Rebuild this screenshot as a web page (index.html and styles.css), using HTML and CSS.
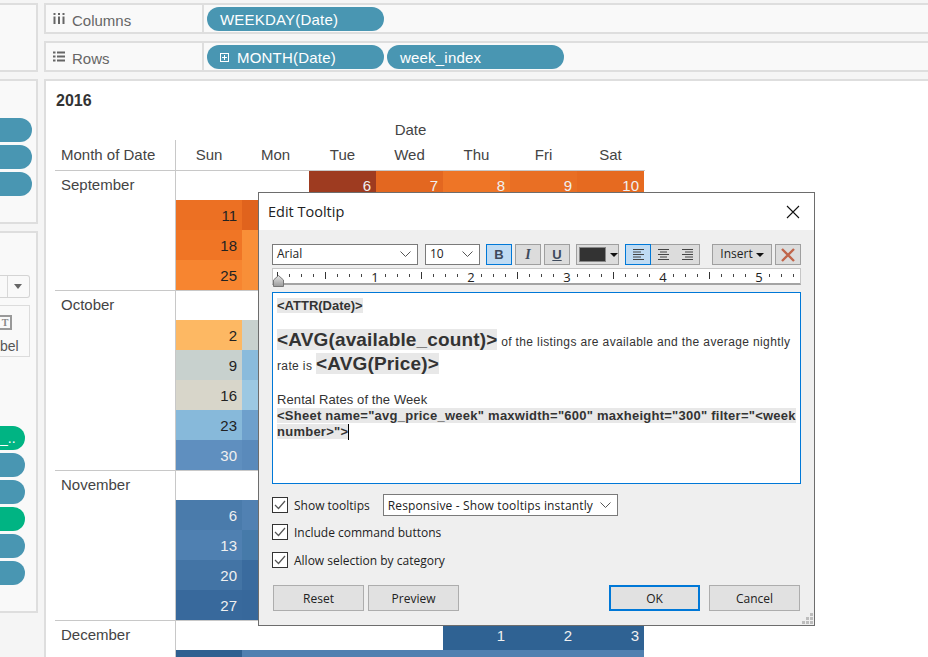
FILE: index.html
```html
<!DOCTYPE html>
<html lang="en">
<head>
  <meta charset="UTF-8" />
  <title>Edit Tooltip</title>
  <link rel="stylesheet" href="styles.css">
</head>
<body>
  <div class="workspace">
    <aside class="side">
      <div class="side-box box-top"></div>
      <div class="side-box box-fields">
        <div class="pill pill-wide"></div>
        <div class="pill pill-wide"></div>
        <div class="pill pill-wide"></div>
      </div>
      <div class="side-box box-marks">
        <div class="mark-select"><span class="mark-arrow"></span></div>
        <div class="mark-card">
          <span class="t-icon">T</span>
          <span class="mark-label">bel</span>
        </div>
        <div class="mark-pills">
          <div class="pill pill-green">_..</div>
          <div class="pill"></div>
          <div class="pill"></div>
          <div class="pill pill-green"></div>
          <div class="pill"></div>
          <div class="pill"></div>
        </div>
      </div>
    </aside>

    <main class="main">
      <div class="shelf">
        <div class="shelf-name">
          <svg class="shelf-icon" width="12" height="11" viewBox="0 0 12 11"><path d="M1.500 0v2M6 0v2M10.500 0v2M1.500 3.500V11M6 3.500V11M10.500 3.500V11" stroke="#666" stroke-width="2"/></svg>
          Columns
        </div>
        <div class="pill shelf-pill">WEEKDAY(Date)</div>
      </div>
      <div class="shelf">
        <div class="shelf-name">
          <svg class="shelf-icon" width="12" height="11" viewBox="0 0 12 11"><path d="M0 1.500h2.500M4 1.500h8M0 5.500h2.500M4 5.500h8M0 9.500h2.500M4 9.500h8" stroke="#666" stroke-width="2"/></svg>
          Rows
        </div>
        <div class="pill shelf-pill"><span class="plus-box"></span>MONTH(Date)</div>
        <div class="pill shelf-pill">week_index</div>
      </div>

      <section class="sheet">
        <h2 class="sheet-title">2016</h2>
        <div class="calendar">
          <div class="date-head">Date</div>
          <div class="head-row">
            <div class="month-name">Month of Date</div>
            <div class="weeks">
              <div>Sun</div><div>Mon</div><div>Tue</div><div>Wed</div><div>Thu</div><div>Fri</div><div>Sat</div>
            </div>
          </div>

          <div class="month">
            <div class="month-name">September</div>
            <div class="weeks">
              <div></div><div></div>
              <div class="day lt" style="background:#9e3b20">6</div>
              <div class="day lt" style="background:#e36720">7</div>
              <div class="day lt" style="background:#ee7526">8</div>
              <div class="day lt" style="background:#e96f24">9</div>
              <div class="day lt" style="background:#e66a20">10</div>
              <div class="day" style="background:#ec7023">11</div>
              <div class="day" style="background:#e0631d">12</div>
              <div class="day" style="background:#ee7526">13</div>
              <div class="day" style="background:#f07a28">14</div>
              <div class="day" style="background:#f07a28">15</div>
              <div class="day" style="background:#ee7526">16</div>
              <div class="day" style="background:#ee7526">17</div>
              <div class="day" style="background:#f07525">18</div>
              <div class="day" style="background:#f98f38">19</div>
              <div class="day" style="background:#f98f38">20</div>
              <div class="day" style="background:#f98f38">21</div>
              <div class="day" style="background:#f98f38">22</div>
              <div class="day" style="background:#f07a28">23</div>
              <div class="day" style="background:#f07a28">24</div>
              <div class="day" style="background:#f78530">25</div>
              <div class="day" style="background:#f88f38">26</div>
              <div class="day" style="background:#f88f38">27</div>
              <div class="day" style="background:#f88f38">28</div>
              <div class="day" style="background:#f88f38">29</div>
              <div class="day" style="background:#f07a28">30</div>
              <div></div>
            </div>
          </div>

          <div class="month">
            <div class="month-name">October</div>
            <div class="weeks">
              <div></div><div></div><div></div><div></div><div></div><div></div><div></div>
              <div class="day" style="background:#fdb863">2</div>
              <div class="day" style="background:#c8d1ce">3</div>
              <div class="day" style="background:#c8d1ce">4</div>
              <div class="day" style="background:#c8d1ce">5</div>
              <div class="day" style="background:#c8d1ce">6</div>
              <div class="day" style="background:#c8d1ce">7</div>
              <div class="day" style="background:#c8d1ce">8</div>
              <div class="day" style="background:#c8d1ce">9</div>
              <div class="day" style="background:#8abbdc">10</div>
              <div class="day" style="background:#8abbdc">11</div>
              <div class="day" style="background:#8abbdc">12</div>
              <div class="day" style="background:#8abbdc">13</div>
              <div class="day" style="background:#8abbdc">14</div>
              <div class="day" style="background:#8abbdc">15</div>
              <div class="day" style="background:#d8d6ca">16</div>
              <div class="day" style="background:#9cc8e2">17</div>
              <div class="day" style="background:#9cc8e2">18</div>
              <div class="day" style="background:#9cc8e2">19</div>
              <div class="day" style="background:#9cc8e2">20</div>
              <div class="day" style="background:#9cc8e2">21</div>
              <div class="day" style="background:#9cc8e2">22</div>
              <div class="day" style="background:#87b9da">23</div>
              <div class="day" style="background:#6ea0cc">24</div>
              <div class="day" style="background:#6ea0cc">25</div>
              <div class="day" style="background:#6ea0cc">26</div>
              <div class="day" style="background:#6ea0cc">27</div>
              <div class="day" style="background:#6ea0cc">28</div>
              <div class="day" style="background:#6ea0cc">29</div>
              <div class="day lt" style="background:#5f8fbf">30</div>
              <div class="day lt" style="background:#5a8abb">31</div>
            </div>
          </div>

          <div class="month">
            <div class="month-name">November</div>
            <div class="weeks">
              <div></div><div></div>
              <div class="day lt" style="background:#5a8abb">1</div>
              <div class="day lt" style="background:#5a8abb">2</div>
              <div class="day lt" style="background:#5a8abb">3</div>
              <div class="day lt" style="background:#5a8abb">4</div>
              <div class="day lt" style="background:#5a8abb">5</div>
              <div class="day lt" style="background:#4a7bab">6</div>
              <div class="day lt" style="background:#5181b2">7</div>
              <div class="day lt" style="background:#5181b2">8</div>
              <div class="day lt" style="background:#5181b2">9</div>
              <div class="day lt" style="background:#5181b2">10</div>
              <div class="day lt" style="background:#5181b2">11</div>
              <div class="day lt" style="background:#5181b2">12</div>
              <div class="day lt" style="background:#4f80b1">13</div>
              <div class="day lt" style="background:#467aa9">14</div>
              <div class="day lt" style="background:#467aa9">15</div>
              <div class="day lt" style="background:#467aa9">16</div>
              <div class="day lt" style="background:#467aa9">17</div>
              <div class="day lt" style="background:#467aa9">18</div>
              <div class="day lt" style="background:#467aa9">19</div>
              <div class="day lt" style="background:#4374a5">20</div>
              <div class="day lt" style="background:#3a6b9e">21</div>
              <div class="day lt" style="background:#3a6b9e">22</div>
              <div class="day lt" style="background:#3a6b9e">23</div>
              <div class="day lt" style="background:#3a6b9e">24</div>
              <div class="day lt" style="background:#3a6b9e">25</div>
              <div class="day lt" style="background:#3a6b9e">26</div>
              <div class="day lt" style="background:#38699c">27</div>
              <div class="day lt" style="background:#37689b">28</div>
              <div class="day lt" style="background:#37689b">29</div>
              <div class="day lt" style="background:#37689b">30</div>
              <div></div><div></div><div></div>
            </div>
          </div>

          <div class="month">
            <div class="month-name">December</div>
            <div class="weeks">
              <div></div><div></div><div></div><div></div>
              <div class="day lt" style="background:#2f6293">1</div>
              <div class="day lt" style="background:#2f6293">2</div>
              <div class="day lt" style="background:#2f6293">3</div>
              <div class="day" style="background:#2f6090"></div>
              <div class="day" style="background:#5080b0"></div>
              <div class="day" style="background:#5080b0"></div>
              <div class="day" style="background:#5080b0"></div>
              <div class="day" style="background:#5080b0"></div>
              <div class="day" style="background:#5080b0"></div>
              <div class="day" style="background:#5080b0"></div>
            </div>
          </div>
        </div>
      </section>
    </main>
  </div>

  <div class="dialog">
    <div class="dialog-title">
      <span>Edit Tooltip</span>
      <svg width="14" height="14" viewBox="0 0 14 14"><path d="M1 1l12 12M13 1L1 13" stroke="#111" stroke-width="1.100"/></svg>
    </div>
    <div class="dialog-body">
      <div class="toolbar">
        <div class="select font-select">Arial<svg class="chev" width="11" height="6" viewBox="0 0 11 6"><path d="M.5.5l5 5 5-5" fill="none" stroke="#555"/></svg></div>
        <div class="select size-select">10<svg class="chev" width="11" height="6" viewBox="0 0 11 6"><path d="M.5.5l5 5 5-5" fill="none" stroke="#555"/></svg></div>
        <div class="tool tool-on fmt bold">B</div>
        <div class="tool fmt italic">I</div>
        <div class="tool fmt under">U</div>
        <div class="tool color-tool"><span class="swatch"></span><span class="caret"></span></div>
        <div class="align-group">
          <div class="tool-on align-btn">
            <svg width="11" height="11" viewBox="0 0 11 11"><path d="M0 .5h11M0 3h8M0 5.500h11M0 8h8M0 10.500h11" stroke="#444"/></svg>
          </div>
          <div class="align-btn">
            <svg width="11" height="11" viewBox="0 0 11 11"><path d="M0 .5h11M2 3h7M0 5.500h11M2 8h7M0 10.500h11" stroke="#444"/></svg>
          </div>
          <div class="align-btn">
            <svg width="11" height="11" viewBox="0 0 11 11"><path d="M0 .5h11M3 3h8M0 5.500h11M3 8h8M0 10.500h11" stroke="#444"/></svg>
          </div>
        </div>
        <div class="tool insert">Insert<span class="caret"></span></div>
        <div class="tool clear">
          <svg width="14" height="14" viewBox="0 0 14 14"><path d="M1 1l12 12M13 1L1 13" stroke="#c0654a" stroke-width="2.400"/></svg>
        </div>
      </div>

      <div class="ruler">
        <span>1</span><span>2</span><span>3</span><span>4</span><span>5</span>
        <svg class="ruler-thumb" width="11" height="12" viewBox="0 0 11 12">
          <defs><linearGradient id="thumbFill" x1="0" y1="0" x2="0" y2="1"><stop offset="0" stop-color="#e4e4e4"/><stop offset="1" stop-color="#9a9a9a"/></linearGradient></defs>
          <path d="M.5 11.500V5L5.500.5l5 4.500v6.500z" fill="url(#thumbFill)" stroke="#777"/>
        </svg>
      </div>

      <div class="editor">
        <p class="ed-line1"><span class="field field-small">&lt;ATTR(Date)&gt;</span></p>
        <p class="ed-para"><span class="field field-big">&lt;AVG(available_count)&gt;</span> of the listings are available and the average nightly rate is <span class="field field-big">&lt;AVG(Price)&gt;</span></p>
        <p class="ed-rental">Rental Rates of the Week</p>
        <p class="ed-sheet"><span class="field field-small">&lt;Sheet name="avg_price_week" maxwidth="600" maxheight="300" filter="&lt;week number&gt;"&gt;</span><span class="cursor"></span></p>
      </div>

      <div class="option option-first">
        <span class="check"><svg width="12" height="10" viewBox="0 0 12 10"><path d="M1 5l3.500 3.500L11 1" fill="none" stroke="#555" stroke-width="1.200"/></svg></span>
        <span class="option-text">Show tooltips</span>
        <div class="select tip-select">Responsive - Show tooltips instantly<svg class="chev" width="11" height="6" viewBox="0 0 11 6"><path d="M.5.5l5 5 5-5" fill="none" stroke="#555"/></svg></div>
      </div>
      <div class="option option-second">
        <span class="check"><svg width="12" height="10" viewBox="0 0 12 10"><path d="M1 5l3.500 3.500L11 1" fill="none" stroke="#555" stroke-width="1.200"/></svg></span>
        <span class="option-text">Include command buttons</span>
      </div>
      <div class="option">
        <span class="check"><svg width="12" height="10" viewBox="0 0 12 10"><path d="M1 5l3.500 3.500L11 1" fill="none" stroke="#555" stroke-width="1.200"/></svg></span>
        <span class="option-text">Allow selection by category</span>
      </div>

      <div class="actions">
        <button class="btn">Reset</button>
        <button class="btn">Preview</button>
        <button class="btn btn-ok">OK</button>
        <button class="btn">Cancel</button>
      </div>
      <svg class="grip" width="11" height="11" viewBox="0 0 11 11"><path d="M8 0h3v3H8zM4 4h3v3H4zM8 4h3v3H8zM0 8h3v3H0zM4 8h3v3H4zM8 8h3v3H8z" fill="#bdbdbd"/></svg>
    </div>
  </div>
</body>
</html>
```

FILE: styles.css
```css
* {
  box-sizing: border-box;
}
html, body {
  margin: 0;
  height: 657px;
  overflow: hidden;
}
body {
  position: relative;
  background: #f5f5f5;
  font-family: "Liberation Sans", Arial, sans-serif;
  color: #333;
}
.workspace {
  display: flex;
  gap: 6px;
  padding-top: 3px;
  height: 657px;
}

/* left cards */
.side {
  width: 38px;
  flex: none;
  display: flex;
  flex-direction: column;
  gap: 7px;
}
.side-box {
  flex: none;
  background: #f9f9f9;
  border: 2px solid #dedede;
  border-left: none;
}
.box-top {
  height: 69px;
}
.box-fields {
  height: 145px;
  padding-top: 37px;
}
.box-marks {
  height: 382px;
  padding-top: 42px;
}
.box-fields .pill {
  margin-bottom: 3px;
}
.pill {
  background: #4996b2;
  color: #fff;
  border-radius: 12px;
  height: 24px;
  line-height: 24px;
  font-size: 15px;
  white-space: nowrap;
}
.pill-wide {
  width: 32px;
  border-radius: 0 12px 12px 0;
}
.pill-green {
  background: #00b483;
}
.mark-select {
  width: 30px;
  height: 23px;
  border: 1px solid #d4d4d4;
  border-left: none;
  border-radius: 0 3px 3px 0;
  background: linear-gradient(to right, #f9f9f9 7px, #d8d8d8 7px, #d8d8d8 8px, #f9f9f9 8px);
  display: flex;
  align-items: center;
  padding-left: 14px;
}
.mark-arrow {
  border-left: 4px solid transparent;
  border-right: 4px solid transparent;
  border-top: 5px solid #666;
}
.mark-card {
  width: 30px;
  height: 52px;
  margin-top: 7px;
  border: 1px solid #dcdcdc;
  border-left: none;
  position: relative;
  font-size: 14px;
  color: #555;
}
.t-icon {
  position: absolute;
  top: 9px;
  left: 0;
  width: 12px;
  height: 15px;
  border: 2px solid #999;
  border-left: none;
  font: bold 10px/11px "Liberation Serif", serif;
  text-align: center;
  color: #888;
}
.mark-label {
  position: absolute;
  top: 32px;
  left: 0;
}
.mark-pills {
  margin-top: 69px;
  display: flex;
  flex-direction: column;
  gap: 3px;
}
.mark-pills .pill {
  width: 25px;
  border-radius: 0 12px 12px 0;
  font-size: 14px;
}

/* shelves */
.main {
  flex: 1;
  display: flex;
  flex-direction: column;
  gap: 7px;
  min-width: 0;
}
.shelf {
  flex: none;
  height: 31px;
  background: #f9f9f9;
  border: 2px solid #dedede;
  border-right: none;
  display: flex;
  align-items: center;
  gap: 3px;
}
.shelf-name {
  width: 158px;
  height: 100%;
  border-right: 2px solid #dedede;
  display: flex;
  align-items: center;
  padding: 3px 0 0 7px;
  gap: 7px;
  font-size: 15px;
  color: #666;
}
.shelf-icon {
  margin-top: -4px;
}
.shelf-pill {
  width: 177px;
  padding: 2px 0 0 13px;
  letter-spacing: 0.2px;
  display: flex;
  align-items: center;
}
.plus-box {
  width: 9px;
  height: 9px;
  margin-right: 8px;
  border: 1px solid #fff;
  background: linear-gradient(#fff, #fff) center / 5px 1px no-repeat, linear-gradient(#fff, #fff) center / 1px 5px no-repeat;
}

/* calendar */
.sheet {
  flex: 1;
  min-height: 0;
  background: #fff;
  border-left: 2px solid #dedede;
  border-top: 2px solid #dedede;
  padding: 10px 9px 0;
}
.sheet-title {
  margin: 0 0 0 1px;
  font-size: 16px;
  line-height: 20px;
  font-weight: bold;
}
.calendar {
  width: 590px;
  margin-top: 9px;
  font-size: 15px;
  color: #444;
}
.date-head {
  height: 20px;
  line-height: 20px;
  padding-left: 121px;
  text-align: center;
}
.head-row,
.month {
  display: flex;
}
.month {
  position: relative;
}
/* line lies over the first row of cells */
.month::before {
  content: "";
  position: absolute;
  left: 0;
  right: 0;
  top: 0;
  height: 1px;
  background: #c8c8c8;
  z-index: 1;
}
.head-row {
  height: 30px;
  line-height: 30px;
}
.month-name {
  width: 121px;
  flex: none;
  border-right: 1px solid #c8c8c8;
  padding-left: 6px;
  padding-top: 4px;
}
.head-row .month-name {
  padding-top: 0;
}
.head-row .weeks {
  text-align: center;
}
.weeks {
  flex: 1;
  display: grid;
  grid-template-columns: 66px repeat(6, 67px);
  grid-auto-rows: 30px;
}
.month .month-name {
  line-height: 22px;
}
.day {
  text-align: right;
  padding-right: 5px;
  line-height: 32px;
  color: #222;
}
.day.lt {
  color: #f0f0f0;
}

/* dialog */
.dialog {
  position: absolute;
  z-index: 2;
  left: 258px;
  top: 192px;
  width: 557px;
  height: 434px;
  border: 1px solid #6d6d6d;
  background: #efefef;
  display: flex;
  flex-direction: column;
  font-family: "Open Sans", "Noto Sans", sans-serif;
  font-size: 12px;
  color: #222;
}
.dialog-title {
  height: 37px;
  flex: none;
  background: #fff;
  display: flex;
  align-items: center;
  justify-content: space-between;
  padding: 0 14px 0 9px;
  font-size: 14.500px;
}
.dialog-body {
  position: relative;
  flex: 1;
  padding: 14px 13px 0;
}
.toolbar {
  display: flex;
  align-items: stretch;
  height: 21px;
}
.select {
  background: #fff;
  border: 1px solid #7a7a7a;
  display: flex;
  align-items: center;
  justify-content: space-between;
  padding: 0 6px 0 4px;
}
.font-select {
  width: 146px;
  margin-right: 7px;
  padding-bottom: 2px;
}
.size-select {
  width: 55px;
  margin-right: 6px;
  padding-bottom: 2px;
}
.tool {
  background: #dcdcdc;
  border: 1px solid #9f9f9f;
  display: flex;
  align-items: center;
  justify-content: center;
}
.tool-on {
  background: #bfdbf3;
  border: 1px solid #0078d7;
}
.fmt {
  width: 26px;
  margin-right: 3px;
  font-family: "Liberation Sans", sans-serif;
  font-size: 13px;
  font-weight: bold;
  color: #3e4a5c;
}
.italic {
  font-style: italic;
  font-family: "Liberation Serif", serif;
  font-size: 14px;
}
.under {
  text-decoration: underline;
  margin-right: 6px;
}
.color-tool {
  width: 43px;
  margin-right: 6px;
  justify-content: flex-start;
  padding-left: 2px;
  gap: 4px;
}
.swatch {
  width: 27px;
  height: 15px;
  background: #333;
  border: 1px solid #888;
}
.caret {
  width: 0;
  height: 0;
  border-left: 4px solid transparent;
  border-right: 4px solid transparent;
  border-top: 4px solid #111;
}
.align-group {
  display: flex;
  width: 75px;
  margin-right: 12px;
  background: #dcdcdc;
  border: 1px solid #9f9f9f;
}
.align-btn {
  flex: 1;
  display: flex;
  align-items: center;
  justify-content: center;
  margin: -1px 0;
}
.align-btn.tool-on {
  margin-left: -1px;
}
.insert {
  width: 60px;
  margin-right: 3px;
  gap: 3px;
  padding-bottom: 2px;
}
.insert .caret {
  margin-top: 2px;
}
.clear {
  width: 26px;
}
.ruler {
  position: relative;
  height: 17px;
  width: 529px;
  margin-top: 3px;
  padding-left: 54px;
  display: flex;
  background-color: #fff;
  border: 1px solid #c6c6c6;
  border-bottom: 2px solid #a4a4a4;
  background-image:
    linear-gradient(#333, #333),
    repeating-linear-gradient(to right, #333 0 1px, transparent 1px 48px),
    repeating-linear-gradient(to right, #444 0 1px, transparent 1px 12px);
  background-size: 1px 7px, 100% 7px, 100% 3px;
  background-position: 4px 3px, 4px 3px, 4px 5px;
  background-repeat: no-repeat;
  font-size: 13px;
  line-height: 17px;
  color: #222;
}
.ruler span {
  width: 96px;
  flex: none;
  height: 14px;
  display: flex;
  justify-content: center;
  /* white gap in the ticks behind the digit */
  background: linear-gradient(#fff, #fff) center / 11px 100% no-repeat;
}
.ruler-thumb {
  position: absolute;
  left: 0;
  top: 6px;
}
.editor {
  height: 192px;
  width: 529px;
  margin-top: 7px;
  background: #fff;
  border: 1px solid #0078d7;
  padding: 4px 4px 3px;
  font-family: "Liberation Sans", Arial, sans-serif;
  font-size: 12px;
  color: #333;
}
.editor p {
  margin: 0;
}
.field {
  background: #e8e8e8;
  font-weight: bold;
}
.field-small {
  font-size: 13px;
}
.field-big {
  font-size: 19px;
  letter-spacing: 0.15px;
}
.ed-line1 {
  line-height: 17px;
}
.editor .ed-para {
  margin-top: 14px;
  line-height: 22px;
  letter-spacing: 0.37px;
}
.editor .ed-rental {
  margin: 15px 0 0;
  line-height: 16px;
  font-size: 13px;
  letter-spacing: 0.1px;
}
.ed-sheet {
  line-height: 15px;
  letter-spacing: 0.25px;
}
.cursor {
  display: inline-block;
  width: 1px;
  height: 16px;
  background: #000;
  vertical-align: top;
}
.option {
  display: flex;
  align-items: center;
  height: 22px;
  margin-top: 6px;
  gap: 6px;
}
.option-first {
  margin-top: 10px;
}
.option-second {
  margin-top: 5px;
}
.check {
  width: 16px;
  height: 16px;
  border: 1px solid #333;
  background: #fff;
  display: flex;
  align-items: center;
  justify-content: center;
}
.tip-select {
  width: 235px;
  height: 22px;
  margin-left: 7px;
  letter-spacing: 0.15px;
}
.actions {
  display: flex;
  margin-top: 14px;
  padding: 0 1px;
}
.btn {
  flex: none;
  width: 91px;
  height: 26px;
  background: #e1e1e1;
  border: 1px solid #adadad;
  font: inherit;
  color: #222;
  padding: 0;
  margin-right: 4px;
}
.btn:last-child {
  margin-right: 0;
}
.btn-ok {
  border: 2px solid #0078d7;
  margin-left: 146px;
  margin-right: 9px;
}
.grip {
  position: absolute;
  right: 1px;
  bottom: 1px;
}
```
